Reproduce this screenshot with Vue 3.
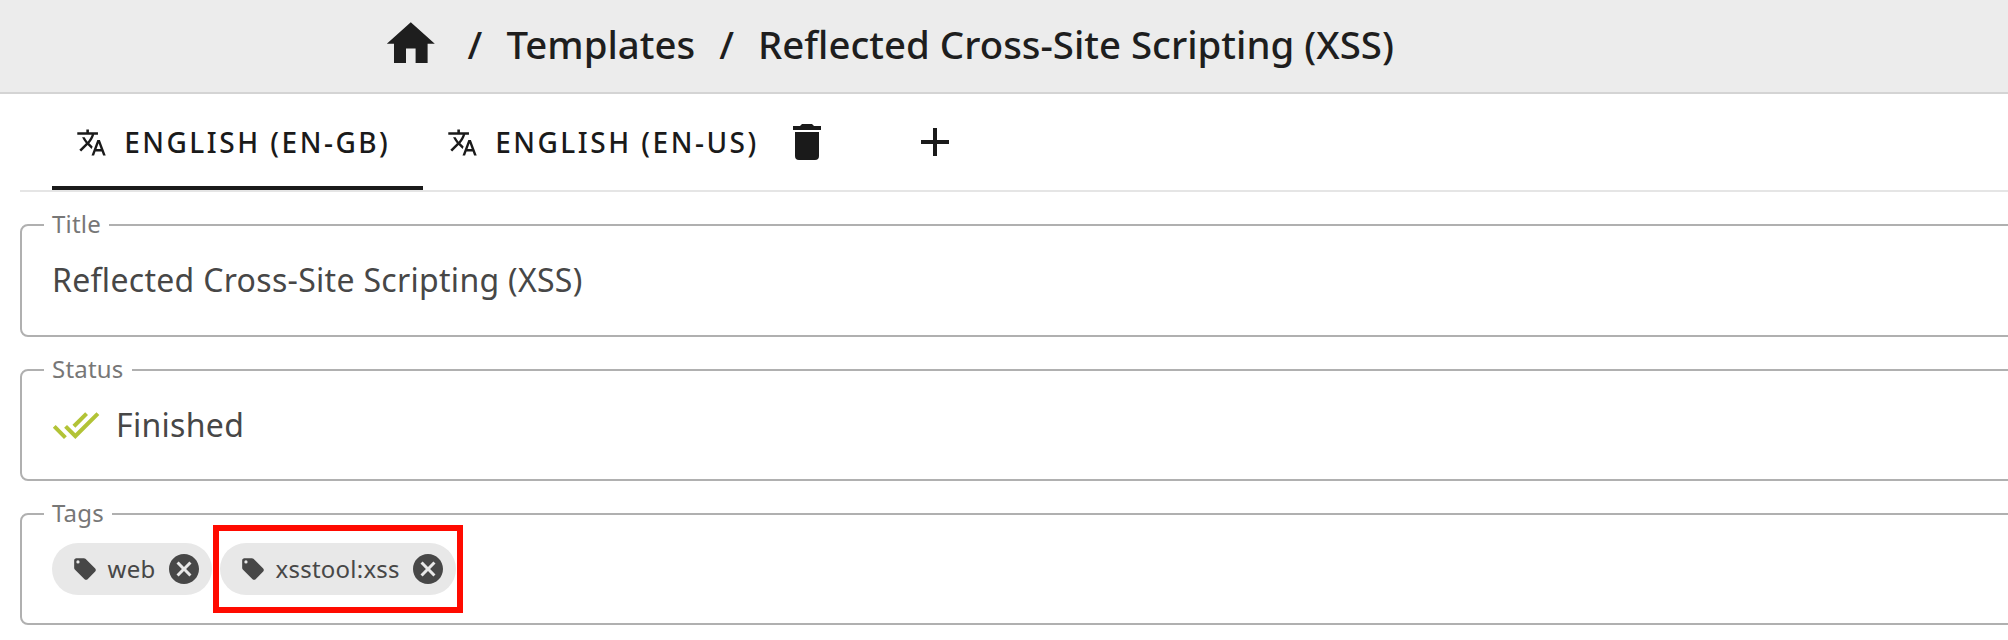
<script setup>
const icons = {
  home: 'M10,20V14H14V20H19V12H22L12,3L2,12H5V20H10Z',
  translate: 'M12.87,15.07L10.33,12.56L10.36,12.53C12.1,10.59 13.34,8.36 14.07,6H17V4H10V2H8V4H1V6H12.17C11.5,7.92 10.44,9.75 9,11.35C8.07,10.32 7.3,9.19 6.69,8H4.69C5.42,9.63 6.42,11.17 7.67,12.56L2.58,17.58L4,19L9,14L12.11,17.11L12.87,15.07M18.5,10H16.5L12,22H14L15.12,19H19.87L21,22H23L18.5,10M15.88,17L17.5,12.67L19.12,17H15.88Z',
  trash: 'M19,4H15.5L14.5,3H9.5L8.5,4H5V6H19M6,19A2,2 0 0,0 8,21H16A2,2 0 0,0 18,19V7H6V19Z',
  plus: 'M19,13H13V19H11V13H5V11H11V5H13V11H19V13Z',
  checkAll: 'M0.41,13.41L6,19L7.41,17.58L1.83,12M22.24,5.58L11.66,16.17L7.5,12L6.07,13.41L11.66,19L23.66,7M18,7L16.59,5.58L10.24,11.93L11.66,13.34L18,7Z',
  tag: 'M5.5,7A1.5,1.5 0 0,1 4,5.5A1.5,1.5 0 0,1 5.5,4A1.5,1.5 0 0,1 7,5.5A1.5,1.5 0 0,1 5.5,7M21.41,11.58L12.41,2.58C12.05,2.22 11.55,2 11,2H4C2.89,2 2,2.89 2,4V11C2,11.55 2.22,12.05 2.59,12.41L11.58,21.41C11.95,21.77 12.45,22 13,22C13.55,22 14.05,21.77 14.41,21.41L21.41,14.41C21.78,14.05 22,13.55 22,13C22,12.44 21.77,11.94 21.41,11.58Z',
  close: 'M12,2C17.53,2 22,6.47 22,12C22,17.53 17.53,22 12,22C6.47,22 2,17.53 2,12C2,6.47 6.47,2 12,2M15.59,7L12,10.59L8.41,7L7,8.41L10.59,12L7,15.59L8.41,17L12,13.41L15.59,17L17,15.59L13.41,12L17,8.41L15.59,7Z',
}
const tags = [
  { name: 'web', marked: false },
  { name: 'xsstool:xss', marked: true },
]
</script>

<template>
  <div class="page">
    <header class="bar">
      <svg class="home" viewBox="0 0 24 24"><path :d="icons.home" /></svg>
      <span class="sep first">/</span>
      <span class="crumb">Templates</span>
      <span class="sep">/</span>
      <span class="crumb">Reflected Cross-Site Scripting (XSS)</span>
    </header>

    <main class="content">
      <nav class="tabs">
        <div class="tab active">
          <svg class="lang" viewBox="0 0 24 24"><path :d="icons.translate" /></svg>
          <span>ENGLISH (EN-GB)</span>
        </div>
        <div class="tab">
          <svg class="lang" viewBox="0 0 24 24"><path :d="icons.translate" /></svg>
          <span>ENGLISH (EN-US)</span>
          <svg class="action trash" viewBox="0 0 24 24"><path :d="icons.trash" /></svg>
        </div>
        <svg class="action add" viewBox="0 0 24 24"><path :d="icons.plus" /></svg>
      </nav>

      <section class="field title">
        <label>Title</label>
        <span class="value">Reflected Cross-Site Scripting (XSS)</span>
      </section>

      <section class="field">
        <label>Status</label>
        <svg class="done" viewBox="0 0 24 24"><path :d="icons.checkAll" /></svg>
        <span class="value">Finished</span>
      </section>

      <section class="field">
        <label>Tags</label>
        <div v-for="t in tags" :key="t.name" class="chip" :class="{ marked: t.marked }">
          <svg class="tag" viewBox="0 0 24 24"><path :d="icons.tag" /></svg>
          <span>{{ t.name }}</span>
          <svg class="close" viewBox="0 0 24 24"><path :d="icons.close" /></svg>
        </div>
      </section>
    </main>
  </div>
</template>

<style>
body { margin: 0; background: #fff; overflow: hidden; }
</style>

<style scoped>
.page {
  width: 100%;
  height: 640px;
  overflow: hidden;
  font-family: "Noto Sans", sans-serif;
  color: #1a1a1a;
}
.page * { box-sizing: border-box; }
svg { display: block; flex: none; fill: currentColor; }
span, label { white-space: nowrap; }

.bar {
  display: flex;
  align-items: center;
  height: 94px;
  padding: 0 0 5px 382px;
  background: #ececec;
  border-bottom: 2px solid #d4d4d4;
  font-size: 38.4px;
  font-weight: 500;
  line-height: 56px;
  color: #1e1e1e;
}
.home { width: 57.6px; height: 57.6px; }
.sep { margin: 0 24px; }
.sep.first { margin-left: 28px; }

.content { padding-left: 20px; }

.tabs {
  display: flex;
  align-items: center;
  height: 98px;
  padding-left: 32px;
  border-bottom: 2px solid #e5e5e5;
  font-size: 28px;
  font-weight: 500;
  letter-spacing: 2.5px;
  line-height: 40px;
}
.tab {
  display: flex;
  align-items: center;
  height: 96px;
  padding-left: 23.5px;
}
.tab.active { width: 371px; border-bottom: 4px solid #1a1a1a; padding-top: 4px; }
.lang { width: 31px; height: 31px; margin-right: 17.7px; }
.action { width: 48px; height: 48px; }
.trash { margin-left: 24px; }
.add { margin-left: 80px; }

.field {
  position: relative;
  display: flex;
  align-items: center;
  width: 2020px;
  height: 112px;
  margin-top: 32px;
  padding-left: 30px;
  border: 2px solid #b0b0b0;
  border-radius: 8px;
  color: #474747;
}
.field.title { height: 113px; padding-bottom: 1px; }
.field label {
  position: absolute;
  left: 22px;
  top: -19px;
  padding: 0 8px;
  background: #fff;
  color: #777;
  font-size: 24px;
  line-height: 34px;
  letter-spacing: 0.2px;
}
.value {
  font-size: 32px;
  line-height: 48px;
  letter-spacing: 0.3px;
}
.done { width: 48px; height: 48px; margin-right: 16px; color: #b2c336; }

.chip {
  position: relative;
  display: flex;
  align-items: center;
  height: 52px;
  margin-right: 8px;
  padding: 0 10px 0 20px;
  border-radius: 26px;
  background: #e8e8e8;
  font-size: 24px;
  letter-spacing: 0.22px;
  line-height: 36px;
}
.tag { width: 26px; height: 26px; margin-right: 9.6px; }
.close { width: 36px; height: 36px; margin-left: 10.6px; }
.marked::after {
  content: "";
  position: absolute;
  inset: -18px -7px;
  border: 6px solid #ff0a00;
}
</style>
